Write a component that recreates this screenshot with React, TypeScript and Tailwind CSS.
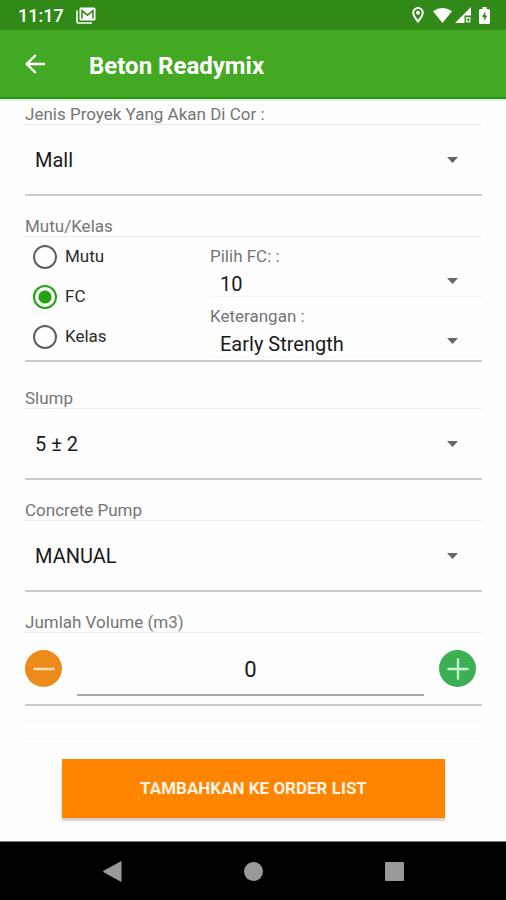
import { useId, useState, type ReactNode } from "react";

function Arrow() {
  return (
    <svg
      className="pointer-events-none absolute right-6 top-1/2 h-[6px] w-[11px] -translate-y-1/2"
      viewBox="0 0 11 6"
      aria-hidden="true"
    >
      <path d="M0 0h11L5.5 6z" fill="#666" />
    </svg>
  );
}

function Spinner({ id, options, className }: { id: string; options: string[]; className: string }) {
  return (
    <div className={`relative ${className}`}>
      <select
        id={id}
        className="h-full w-full appearance-none bg-transparent pl-[10px] pr-12 text-[20px] text-[#1a1a1a] outline-none"
      >
        {options.map((o) => (
          <option key={o}>{o}</option>
        ))}
      </select>
      <Arrow />
    </div>
  );
}

const card = "border-t border-b-2 border-t-[#ececec] border-b-[#cbcbcb]";
const caption = "block text-[17px] leading-5 text-[#757575]";

function Field({ label, options }: { label: string; options: string[] }) {
  const id = useId();
  return (
    <div>
      <label htmlFor={id} className={caption}>
        {label}
      </label>
      <div className={card}>
        <Spinner id={id} options={options} className="h-[69px] pt-px" />
      </div>
    </div>
  );
}

function SmallField({ label, options }: { label: string; options: string[] }) {
  const id = useId();
  return (
    <div>
      <label htmlFor={id} className={caption}>
        {label}
      </label>
      <Spinner id={id} options={options} className="h-[31px] border-b border-[#f3f3f3] pt-[3px]" />
    </div>
  );
}

function RoundButton({ label, className, onClick, children }: {
  label: string;
  className: string;
  onClick: () => void;
  children: ReactNode;
}) {
  return (
    <button
      type="button"
      aria-label={label}
      onClick={onClick}
      className={`flex size-[37px] shrink-0 items-center justify-center rounded-full ${className}`}
    >
      <svg viewBox="0 0 22 22" className="size-[22px]" fill="none" stroke="currentColor" strokeWidth="2.4" strokeLinecap="round">
        {children}
      </svg>
    </button>
  );
}

function StatusBar() {
  return (
    <div className="flex h-[30px] items-center justify-between bg-[#318a18] pl-[18px] pr-4 text-white">
      <div className="flex items-center gap-3">
        <span className="pt-px text-[18px] font-medium leading-[30px]">11:17</span>
        <svg width="20" height="17" viewBox="0 0 20 17" fill="none" aria-hidden="true">
          <path d="M1 3.500v11q0 1.500 1.500 1.500H16" stroke="#fff" strokeWidth="1.600" />
          <rect x="3.500" y="0.500" width="16" height="13" rx="1.500" fill="#fff" />
          <path d="M6 11.800V3.600l5.500 4.600L17 3.600v8.200" stroke="#318a18" strokeWidth="1.500" />
        </svg>
      </div>
      <div className="flex items-center" aria-hidden="true">
        <svg className="mr-[9px]" width="12" height="16" viewBox="0 0 12 16" fill="none">
          <path d="M6 14.500C3.500 11.500 1.200 8.500 1.200 5.800a4.800 4.800 0 0 1 9.600 0c0 2.700-2.300 5.700-4.800 8.700z" stroke="#fff" strokeWidth="2" />
          <circle cx="6" cy="5.800" r="2" fill="#fff" />
        </svg>
        <svg className="mr-[3px]" width="19" height="15" viewBox="0 0 19 15">
          <path d="M0 3.200Q9.500-3 19 3.200L9.500 15z" fill="#fff" />
        </svg>
        <svg className="mr-2" width="16" height="16" viewBox="0 0 16 16">
          <path d="M16 0v8.500h-6.500V16H0z" fill="#fff" />
          <path d="M10.800 10H15.500v5.500h-4.700z" fill="#fff" fillOpacity=".8" />
          <path d="M12.500 11.500h1.700v2.500h-1.700z" fill="#318a18" />
        </svg>
        <svg width="11" height="17" viewBox="0 0 11 17">
          <path d="M3.500 0h4v2H9.500Q11 2 11 3.500v12Q11 17 9.500 17h-8Q0 17 0 15.500v-12Q0 2 1.500 2h2z" fill="#fff" />
          <path d="M6.300 4.500 3 10h2.200v4L8.200 8.500H6.300z" fill="#318a18" />
        </svg>
      </div>
    </div>
  );
}

function NavBar() {
  return (
    <nav className="flex h-[59px] items-center justify-center gap-[122px] border-t border-[#777] bg-black text-[#999]">
      <button type="button" aria-label="Back">
        <svg width="19" height="21" viewBox="0 0 19 21" fill="currentColor">
          <path d="M18.500 1v19q0 1-1 .5L.6 11.200q-1-.7 0-1.400L17.500.5q1-.5 1 .5z" />
        </svg>
      </button>
      <button type="button" aria-label="Home" className="size-[19px] rounded-full bg-[#999]" />
      <button type="button" aria-label="Recent apps" className="size-[19px] rounded-[1px] bg-[#999]" />
    </nav>
  );
}

export default function App() {
  const [grade, setGrade] = useState("FC");
  const [volume, setVolume] = useState(0);
  const volumeId = useId();

  return (
    <div className="flex min-h-screen flex-col bg-[#fefefe] font-[Roboto,sans-serif]">
      <StatusBar />
      <header className="flex h-[69px] items-center border-b-2 border-[#1c9a12] bg-[#43a922] pl-[25px] text-white">
        <button type="button" aria-label="Back" className="mr-[44px]">
          <svg width="20" height="20" viewBox="0 0 20 20" fill="none" stroke="currentColor" strokeWidth="2.400">
            <path d="M20 10H2M10.800 1 1.800 10l9 9" />
          </svg>
        </button>
        <h1 className="pt-1 text-[24px] font-bold leading-8">Beton Readymix</h1>
      </header>

      <main className="grow border-t-2 border-[#e6ebe4] px-6 pt-[3px]">
        <form className="pl-px" onSubmit={(e) => e.preventDefault()}>
          <Field label="Jenis Proyek Yang Akan Di Cor :" options={["Mall"]} />

          <fieldset className="mt-5">
            <legend className={caption}>Mutu/Kelas</legend>
            <div className={`flex h-[126px] ${card}`}>
              <div className="w-[185px] shrink-0 pl-2">
                {["Mutu", "FC", "Kelas"].map((g) => (
                  <label key={g} className="flex h-10 items-center gap-2 text-[17px] text-[#2a2a2a]">
                    <input
                      type="radio"
                      name="grade"
                      checked={grade === g}
                      onChange={() => setGrade(g)}
                      className="size-6 appearance-none rounded-full border-2 border-[#5f5f5f] checked:border-[#22a312] checked:bg-[radial-gradient(circle,#22a312_6px,transparent_7px)]"
                    />
                    {g}
                  </label>
                ))}
              </div>
              <div className="flex grow flex-col gap-[9px] pt-[9px]">
                <SmallField label="Pilih FC: :" options={["10"]} />
                <SmallField label="Keterangan :" options={["Early Strength"]} />
              </div>
            </div>
          </fieldset>

          <div className="mt-[26px] flex flex-col gap-5">
            <Field label="Slump" options={["5 ± 2"]} />
            <Field label="Concrete Pump" options={["MANUAL"]} />
            <div>
              <label htmlFor={volumeId} className={caption}>
                Jumlah Volume (m3)
              </label>
              <div className={`flex h-[74px] items-center pr-[6px] ${card}`}>
                <RoundButton label="Kurangi" className="bg-[#ec8b1a] text-[#fbdcb8]" onClick={() => setVolume(Math.max(0, volume - 1))}>
                  <path d="M1.500 11h19" />
                </RoundButton>
                <input
                  id={volumeId}
                  inputMode="numeric"
                  value={volume}
                  onChange={(e) => setVolume(Number(e.target.value) || 0)}
                  className="mx-[15px] mt-[2px] h-[52px] min-w-0 grow border-b-2 border-[#a8a8a8] pt-[2px] text-center text-[22px] text-[#1a1a1a] outline-none"
                />
                <RoundButton label="Tambah" className="bg-[#3bb055] text-[#c6f0cd]" onClick={() => setVolume(volume + 1)}>
                  <path d="M1.500 11h19M11 1.500v19" />
                </RoundButton>
              </div>
            </div>
          </div>

          <div className="mt-[15px] h-[19px] border-y border-[#f7f7f7]" />
          <button
            type="submit"
            className="mx-[37px] mt-[19px] mb-[23px] block h-[59px] w-[calc(100%-74px)] bg-[#ff8500] text-[17px] font-bold text-[#fff3e4] shadow-[0_3px_2px_#d4cdca]"
          >
            TAMBAHKAN KE ORDER LIST
          </button>
        </form>
      </main>
      <NavBar />
    </div>
  );
}
